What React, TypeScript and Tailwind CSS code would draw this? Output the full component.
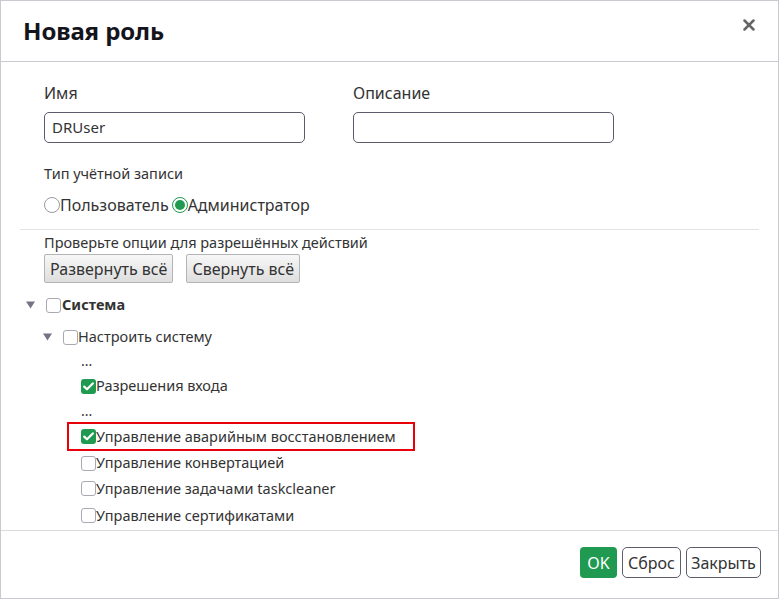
import { X } from "lucide-react";

function Caret() {
  return (
    <svg width="9" height="8" viewBox="0 0 9 8" className="shrink-0">
      <path d="M0 0.5H9L4.5 7.5Z" fill="#737584" />
    </svg>
  );
}

function Box({ checked = false }: { checked?: boolean }) {
  if (checked) {
    return (
      <span className="flex h-[15px] w-[15px] shrink-0 items-center justify-center rounded-[3px] bg-[#1f9a50]">
        <svg width="11" height="9" viewBox="0 0 11 9">
          <path d="M1.2 4.6L4 7.3L9.8 1.4" stroke="white" strokeWidth="2.2" fill="none" strokeLinecap="round" strokeLinejoin="round" />
        </svg>
      </span>
    );
  }
  return <span className="h-[15px] w-[15px] shrink-0 rounded-[3px] border border-[#a9a9b2] bg-white" />;
}

function Radio({ checked = false }: { checked?: boolean }) {
  return checked ? (
    <span className="flex h-[16px] w-[16px] shrink-0 items-center justify-center rounded-full border-[1.5px] border-[#1f9a50] bg-white">
      <span className="h-[10px] w-[10px] rounded-full bg-[#1f9a50]" />
    </span>
  ) : (
    <span className="h-[16px] w-[16px] shrink-0 rounded-full border border-[#9a9aa6] bg-white" />
  );
}

function Leaf({ label, checked, h }: { label: string; checked?: boolean; h: string }) {
  return (
    <div className={`flex items-center pl-[61px] ${h}`}>
      <Box checked={checked} />
      <span className="text-[14.5px] text-[#333]">{label}</span>
    </div>
  );
}

export default function App() {
  return (
    <div className="flex h-[599px] w-[779px] flex-col border border-[#c9c9d0] bg-white font-['Noto_Sans',sans-serif] text-[#333]">
      {/* header */}
      <div className="flex h-[61px] shrink-0 items-center justify-between border-b border-[#c9c9d0] pl-[22px] pr-[20px]">
        <h1 className="text-[24px] font-bold leading-none tracking-[-0.1px] text-[#14141c]">Новая роль</h1>
        <X size={18} strokeWidth={3.4} className="-mt-[13px] text-[#666]" />
      </div>

      {/* body */}
      <div className="flex-1 border-b border-[#dcdce0] px-[19px] pt-[19px]">
        <div className="flex gap-[48px] pl-[24px]">
          <div className="flex w-[261px] flex-col">
            <label className="text-[16px] leading-[24px]">Имя</label>
            <div className="mt-[7px] flex h-[31px] items-center rounded-[5px] border border-[#5b5b6b] px-[7px] text-[15px] text-[#333]">
              DRUser
            </div>
          </div>
          <div className="flex w-[261px] flex-col">
            <label className="text-[16px] leading-[24px]">Описание</label>
            <div className="mt-[7px] h-[31px] rounded-[5px] border border-[#5b5b6b]" />
          </div>
        </div>

        <div className="mt-[20px] pl-[24px] text-[14.5px] leading-[20px]">Тип учётной записи</div>
        <div className="mt-[10px] flex h-[24px] items-center pl-[24px] text-[16px]">
          <Radio />
          <span>Пользователь</span>
          <span className="ml-[3px]" />
          <Radio checked />
          <span>Администратор</span>
        </div>

        <div className="mt-[12px] h-px bg-[#e3e4e8]" />

        <div className="mt-[2px] pl-[24px] text-[14.5px] leading-[20px]">Проверьте опции для разрешённых действий</div>
        <div className="mt-[2px] flex gap-[13px] pl-[24px]">
          <button className="h-[29px] rounded-[2px] border border-[#b4b4b8] bg-gradient-to-b from-[#f7f7f7] to-[#dedede] px-[5px] text-[16px] text-[#333]">
            Развернуть всё
          </button>
          <button className="h-[29px] rounded-[2px] border border-[#b4b4b8] bg-gradient-to-b from-[#f7f7f7] to-[#dedede] px-[5px] text-[16px] text-[#333]">
            Свернуть всё
          </button>
        </div>

        {/* tree */}
        <div className="mt-[9px]">
          <div className="flex h-[26px] items-center pl-[6px]">
            <Caret />
            <span className="ml-[11px]" />
            <Box />
            <span className="ml-[1px] text-[14.5px] font-bold">Система</span>
          </div>
          <div className="mt-[6px] flex h-[26px] items-center pl-[23px]">
            <Caret />
            <span className="ml-[11px]" />
            <Box />
            <span className="text-[14.5px]">Настроить систему</span>
          </div>
          <div className="flex h-[22px] items-center pl-[61px] text-[14px] leading-none">...</div>
          <Leaf label="Разрешения входа" checked h="h-[28px]" />
          <div className="flex h-[22px] items-center pl-[61px] text-[14px] leading-none">...</div>
          <div className="pl-[47px]">
            <div className="inline-flex h-[29px] items-center border-2 border-[#e8000b] pl-[12px] pr-[17px]">
              <Box checked />
              <span className="text-[14.5px]">Управление аварийным восстановлением</span>
            </div>
          </div>
          <Leaf label="Управление конвертацией" h="h-[24px]" />
          <Leaf label="Управление задачами taskcleaner" h="h-[27px]" />
          <Leaf label="Управление сертификатами" h="h-[27px]" />
        </div>
      </div>

      {/* footer */}
      <div className="flex h-[67px] shrink-0 items-start justify-end gap-[5px] pr-[17px] pt-[16px]">
        <button className="h-[31px] w-[37px] rounded-[4px] bg-[#1f9a50] text-[16px] text-white">OK</button>
        <button className="h-[31px] w-[59px] rounded-[5px] border-[1.5px] border-[#5e5e6c] bg-white text-[16px] text-[#333]">Сброс</button>
        <button className="h-[31px] w-[75px] rounded-[5px] border-[1.5px] border-[#5e5e6c] bg-white text-[16px] text-[#333]">Закрыть</button>
      </div>
    </div>
  );
}
